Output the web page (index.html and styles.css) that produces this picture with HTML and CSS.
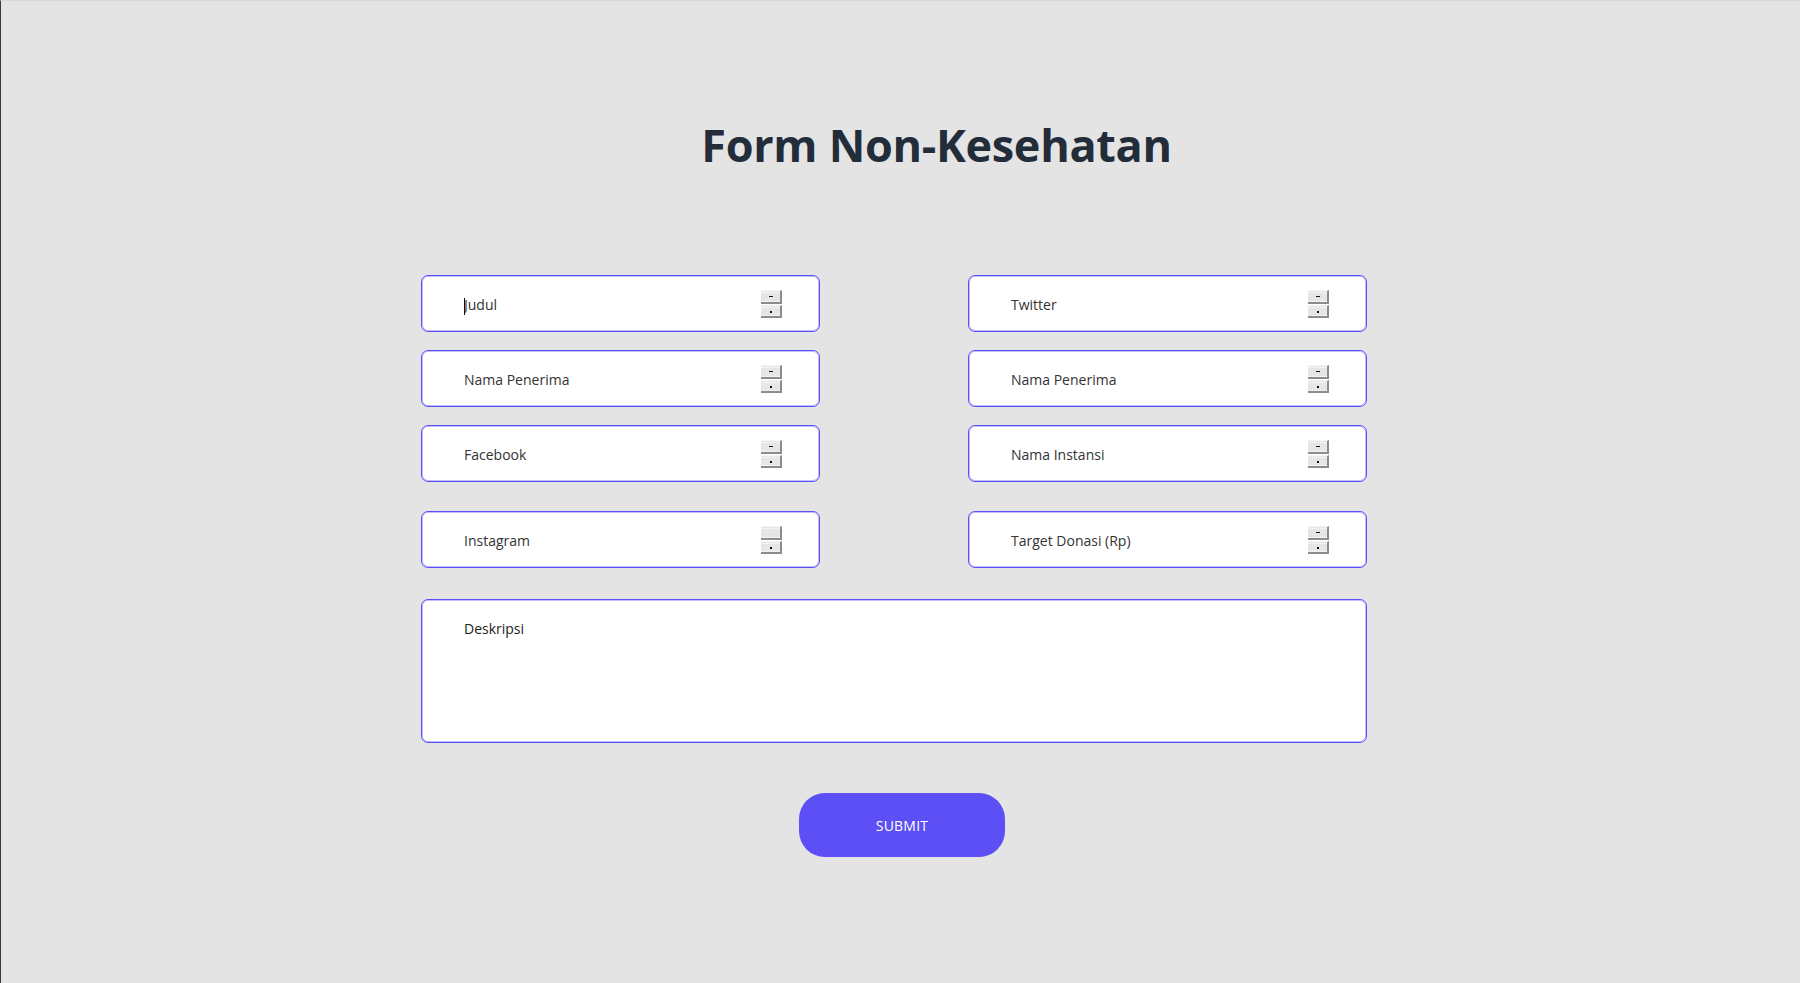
FILE: index.html
```html
<!DOCTYPE html>
<html lang="id">
<head>
<meta charset="utf-8">
<title>Form Non-Kesehatan</title>
<link rel="stylesheet" href="styles.css">
</head>
<body>
<main class="page">
  <h1 class="title">Form Non-Kesehatan</h1>
  <form class="form">
    <div class="grid">
      <label class="field"><input class="input input-focus" type="text" placeholder="Judul"><span class="caret"></span><span class="spin"><span class="spin-btn"><i class="dash"></i></span><span class="spin-btn"><i class="dot"></i></span></span></label>
      <label class="field"><input class="input" type="text" placeholder="Twitter"><span class="spin"><span class="spin-btn"><i class="dash"></i></span><span class="spin-btn"><i class="dot"></i></span></span></label>
      <label class="field"><input class="input" type="text" placeholder="Nama Penerima"><span class="spin"><span class="spin-btn"><i class="dash"></i></span><span class="spin-btn"><i class="dot"></i></span></span></label>
      <label class="field"><input class="input" type="text" placeholder="Nama Penerima"><span class="spin"><span class="spin-btn"><i class="dash"></i></span><span class="spin-btn"><i class="dot"></i></span></span></label>
      <label class="field"><input class="input" type="text" placeholder="Facebook"><span class="spin"><span class="spin-btn"><i class="dash"></i></span><span class="spin-btn"><i class="dot"></i></span></span></label>
      <label class="field"><input class="input" type="text" placeholder="Nama Instansi"><span class="spin"><span class="spin-btn"><i class="dash"></i></span><span class="spin-btn"><i class="dot"></i></span></span></label>
      <label class="field field-gap"><input class="input" type="text" placeholder="Instagram"><span class="spin"><span class="spin-btn"></span><span class="spin-btn"><i class="dot"></i></span></span></label>
      <label class="field field-gap"><input class="input" type="text" placeholder="Target Donasi (Rp)"><span class="spin"><span class="spin-btn"><i class="dash"></i></span><span class="spin-btn"><i class="dot"></i></span></span></label>
    </div>
    <textarea class="textarea" placeholder="Deskripsi"></textarea>
    <div class="actions">
      <button class="submit" type="button">SUBMIT</button>
    </div>
  </form>
</main>
<span class="corner"></span>
</body>
</html>
```
FILE: styles.css
```css
* { box-sizing: border-box; }
html, body { height: 100%; }
body {
  margin: 0;
  background: #e4e4e4;
  border-left: 1px solid #3a3a3a;
  border-top: 1px solid #d6d6d6;
  font-family: "Open Sans", "Noto Sans", sans-serif;
  overflow: hidden;
  position: relative;
}
.page {
  display: flex;
  flex-direction: column;
  padding: 0 0 0 420px;
}
.title {
  margin: 112px 0 0 0;
  width: 945px;
  padding-left: 86px;
  text-align: center;
  font-size: 45px;
  font-weight: 700;
  color: #232d3a;
  line-height: 64px;
  letter-spacing: -0.3px;
}
.form {
  width: 946px;
  margin-top: 98px;
  display: flex;
  flex-direction: column;
}
.grid {
  display: grid;
  grid-template-columns: 399px 399px;
  column-gap: 148px;
  row-gap: 18px;
}
.field {
  position: relative;
  display: block;
  height: 57px;
}
.field-gap { margin-top: 11px; }
.input {
  width: 100%;
  height: 100%;
  border: 1px solid #5b4ff5;
  box-shadow: inset 0 0 0 1px rgba(120, 108, 255, 0.45);
  border-radius: 7px;
  background: #fff;
  padding: 2px 60px 0 42px;
  font-family: "Open Sans", "Noto Sans", sans-serif;
  font-size: 14px;
  color: #333;
  outline: none;
}
.input::placeholder { color: #333; opacity: 1; }
.caret {
  position: absolute;
  left: 43px;
  top: 23px;
  width: 1px;
  height: 17px;
  background: #111;
}
.spin {
  position: absolute;
  right: 38px;
  top: 15px;
  width: 21px;
  height: 28px;
  display: flex;
  flex-direction: column;
  gap: 1px;
}
.spin-btn {
  flex: 1;
  position: relative;
  background: #e6e6e6;
  border-right: 2px solid #8c8c8c;
  border-bottom: 2px solid #8c8c8c;
  border-top: 1px solid #f5f5f5;
  display: flex;
  align-items: center;
  justify-content: center;
}
.spin-btn::before,
.spin-btn::after {
  content: "";
  position: absolute;
  left: 0;
  right: 0;
  border-top: 1px dotted #ffffff;
}
.spin-btn::before { top: 1px; }
.spin-btn::after { bottom: 0; }
.dash { display: block; width: 4px; height: 1px; background: #111; }
.dot { display: block; width: 2px; height: 2px; background: #111; margin-top: 2px; }
.textarea {
  margin-top: 31px;
  width: 946px;
  height: 144px;
  border: 1px solid #5b4ff5;
  box-shadow: inset 0 0 0 1px rgba(120, 108, 255, 0.45);
  border-radius: 7px;
  background: #fff;
  padding: 19px 42px;
  font-family: "Open Sans", "Noto Sans", sans-serif;
  font-size: 14px;
  color: #222;
  resize: none;
  outline: none;
}
.textarea::placeholder { color: #222; opacity: 1; }
.actions {
  display: flex;
  justify-content: center;
  margin-top: 50px;
  padding-left: 16px;
}
.submit {
  width: 206px;
  height: 64px;
  border: none;
  border-radius: 26px;
  background: #5b4ff5;
  color: #fff;
  font-family: "Open Sans", "Noto Sans", sans-serif;
  font-size: 14px;
  letter-spacing: 0.2px;
  cursor: pointer;
}
.corner {
  position: absolute;
  left: -1px;
  bottom: 0;
  width: 1px;
  height: 28px;
  background: #4a6aa8;
}
```
